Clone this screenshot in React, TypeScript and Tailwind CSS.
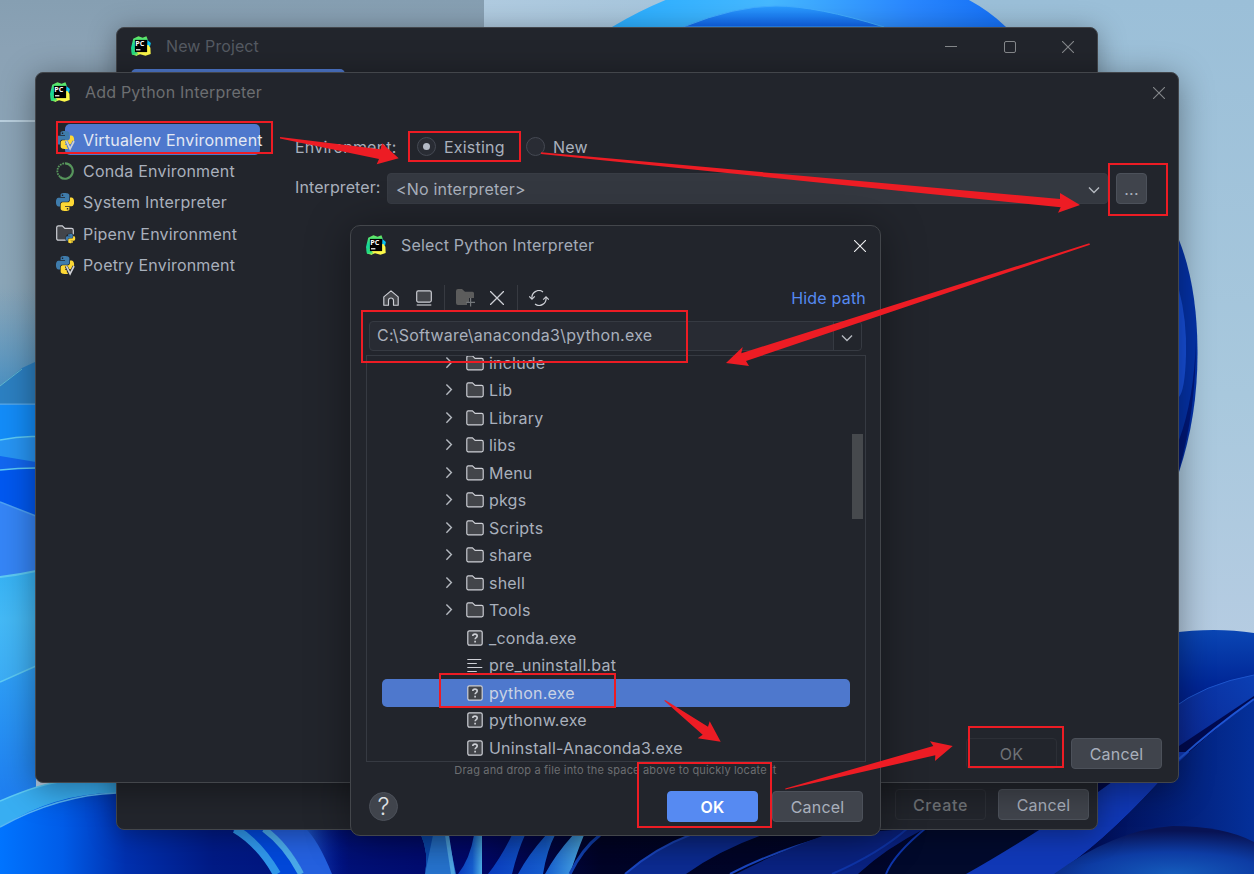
import type { ReactNode } from "react";

type FileKind = "folder" | "exe" | "text";

interface TreeNode {
  name: string;
  kind: FileKind;
  selected?: boolean;
}

const TREE: TreeNode[] = [
  { name: "include", kind: "folder" },
  { name: "Lib", kind: "folder" },
  { name: "Library", kind: "folder" },
  { name: "libs", kind: "folder" },
  { name: "Menu", kind: "folder" },
  { name: "pkgs", kind: "folder" },
  { name: "Scripts", kind: "folder" },
  { name: "share", kind: "folder" },
  { name: "shell", kind: "folder" },
  { name: "Tools", kind: "folder" },
  { name: "_conda.exe", kind: "exe" },
  { name: "pre_uninstall.bat", kind: "text" },
  { name: "python.exe", kind: "exe", selected: true },
  { name: "pythonw.exe", kind: "exe" },
  { name: "Uninstall-Anaconda3.exe", kind: "exe" },
];

const PY_TOP =
  "M14.25.18l.9.2.73.26.59.3.45.32.34.34.25.34.16.33.1.3.04.26.02.2-.01.13V8.5l-.05.63-.13.55-.21.46-.26.38-.3.31-.33.25-.35.19-.35.14-.33.1-.3.07-.26.04-.21.02H8.77l-.69.05-.59.14-.5.22-.41.27-.33.32-.27.35-.2.36-.15.37-.1.35-.07.32-.04.27-.02.21v3.06H3.17l-.21-.03-.28-.07-.32-.12-.35-.18-.36-.26-.36-.36-.35-.46-.32-.59-.28-.73-.21-.88-.14-1.05-.05-1.23.06-1.22.16-1.04.24-.87.32-.71.36-.57.4-.44.42-.33.42-.24.4-.16.36-.1.32-.05.24-.01h.16l.06.01h8.16v-.83H6.18l-.01-2.75-.02-.37.05-.34.11-.31.17-.28.25-.26.31-.23.38-.2.44-.18.51-.15.58-.12.64-.1.71-.06.77-.04.84-.02 1.27.05zm-6.3 1.98l-.23.33-.08.41.08.41.23.34.33.22.41.09.41-.09.33-.22.23-.34.08-.41-.08-.41-.23-.33-.33-.22-.41-.09-.41.09z";
const PY_BOTTOM =
  "M21.1 6.11l.28.06.32.12.35.18.36.27.36.35.35.47.32.59.28.73.21.88.14 1.04.05 1.23-.06 1.23-.16 1.04-.24.86-.32.71-.36.57-.4.45-.42.33-.42.24-.4.16-.36.09-.32.05-.24.02-.16-.01h-8.22v.82h5.84l.01 2.76.02.36-.05.34-.11.31-.17.29-.25.25-.31.24-.38.2-.44.17-.51.15-.58.13-.64.09-.71.07-.77.04-.84.01-1.27-.04-1.07-.14-.9-.2-.73-.25-.59-.3-.45-.33-.34-.34-.25-.34-.16-.33-.1-.3-.04-.25-.02-.2.01-.13v-5.34l.05-.64.13-.54.21-.46.26-.38.3-.32.33-.24.35-.2.35-.14.33-.1.3-.06.26-.04.21-.02.13-.01h5.84l.69-.05.59-.14.5-.21.41-.28.33-.32.27-.35.2-.36.15-.36.1-.35.07-.32.04-.28.02-.21V6.07h2.09l.14.01zm-6.47 14.25l-.23.33-.08.41.08.41.23.33.33.23.41.08.41-.08.33-.23.23-.33.08-.41-.08-.41-.23-.33-.33-.23-.41-.08-.41.08z";

function PythonMark() {
  return (
    <>
      <path d={PY_TOP} fill="#3f7cac" />
      <path d={PY_BOTTOM} fill="#fdd835" />
    </>
  );
}

function IconPython() {
  return (
    <svg viewBox="0 0 24 24" className="h-[18px] w-[18px] shrink-0">
      <PythonMark />
    </svg>
  );
}

function IconVirtualenv({ halo = "#22252c" }: { halo?: string }) {
  return (
    <svg viewBox="0 0 18 18" className="h-[18px] w-[18px] shrink-0 overflow-visible">
      <g transform="scale(.75)">
        <PythonMark />
      </g>
      <path d="M10.2 10.2l3.8 8 4-8" fill="none" stroke={halo} strokeWidth="3" />
      <path d="M10.4 10.2l3.7 7.6 3.9-7.6" fill="none" stroke="#ced0d6" strokeWidth="1.8" />
    </svg>
  );
}

function IconConda() {
  return (
    <svg viewBox="0 0 18 18" className="h-[18px] w-[18px] shrink-0" fill="none" stroke="#57965c">
      <path d="M9 1.3a7.7 7.7 0 1 1-5 13.5" strokeWidth="2.2" />
      <path d="M4 14.8a7.7 7.7 0 0 1 5-13.5" strokeWidth="1.8" strokeDasharray="1.7 .9" />
    </svg>
  );
}

function IconPipenv() {
  return (
    <svg viewBox="0 0 18 18" className="h-[18px] w-[18px] shrink-0 overflow-visible">
      <path
        d="M.7 2.6C.7 1.5 1.4.8 2.5.8h3.8l2.6 2.6h6.6c1.1 0 1.8.7 1.8 1.8v8.2c0 1.1-.7 1.8-1.8 1.8h-13c-1.1 0-1.8-.7-1.8-1.8z"
        fill="#43454a"
        stroke="#ced0d6"
        strokeWidth="1.2"
      />
      <circle cx="14.5" cy="13.5" r="5.2" fill="#22252c" />
      <g transform="translate(9.8 8.8) scale(.39)">
        <PythonMark />
      </g>
    </svg>
  );
}

function IconPyCharm() {
  return (
    <svg viewBox="0 0 20 20" className="h-5 w-5 shrink-0">
      <defs>
        <linearGradient id="pc-green" x1="0" y1="0" x2=".6" y2="1">
          <stop offset="0" stopColor="#21d789" />
          <stop offset=".55" stopColor="#22dd80" />
          <stop offset="1" stopColor="#b4ee4e" />
        </linearGradient>
        <linearGradient id="pc-left" x1="0" y1="0" x2="0" y2="1">
          <stop offset="0" stopColor="#6bea60" />
          <stop offset=".5" stopColor="#16d69b" />
          <stop offset="1" stopColor="#2bdc75" />
        </linearGradient>
      </defs>
      <path d="M2.2 2.8L7.4.2l4.2 1.5L15.4.2l1.3 3.2L12 13 6 19.5.9 18.4 0 12z" fill="url(#pc-left)" />
      <path d="M16.4 4l3.5 3-.9 3.4-3 1z" fill="#07c3f2" />
      <path d="M17.2 8.8l2.2 3 .3 6.2-5.2 1.7-5.4-1.5-4 1.4L3 15z" fill="#fcf84a" />
      <path d="M.6 14.5L5 15.5l3 3-2.6 1.3L1 18.6z" fill="url(#pc-green)" />
      <path d="M3.900 3.900h12.200v12.200H3.900z" fill="#000" />
      <text
        x="4.300"
        y="9.900"
        className="font-['Open_Sans',sans-serif] text-[7.200px] font-bold tracking-normal"
        fill="#fff"
      >
        PC
      </text>
      <path d="M5 13.200h4.400v1.200H5z" fill="#fff" />
    </svg>
  );
}

function IconFolder() {
  return (
    <svg viewBox="0 0 18 18" className="h-[18px] w-[18px] shrink-0">
      <path
        d="M.8 3.4c0-.9.6-1.5 1.5-1.5h4.1l2.7 2.5h6.6c.9 0 1.5.6 1.5 1.5v8.4c0 .9-.6 1.5-1.5 1.5H2.3c-.9 0-1.5-.6-1.5-1.5z"
        fill="#43454a"
        stroke="#ced0d6"
        strokeWidth="1.15"
      />
    </svg>
  );
}

function IconUnknownFile() {
  return (
    <svg viewBox="0 0 18 18" className="h-[18px] w-[18px] shrink-0" fill="none" stroke="#ced0d6">
      <rect x="1.8" y="1.8" width="14.4" height="14.4" rx="1.6" fill="#43454a" strokeWidth="1.2" />
      <path d="M6.8 7.1c0-1.2.9-2 2.2-2s2.200.8 2.200 1.900c0 1.600-2.100 1.500-2.100 3.300" strokeWidth="1.6" />
      <path d="M9.1 11.700v1.700" strokeWidth="1.7" />
    </svg>
  );
}

function IconTextFile() {
  return (
    <svg viewBox="0 0 18 18" className="h-[18px] w-[18px] shrink-0" stroke="#ced0d6" strokeWidth="1.2">
      <path d="M1.300 3.500h14M1.300 7.500h9.500M1.300 11.500h15M1.300 15.500h9.500" />
    </svg>
  );
}

function IconChevron({ dir }: { dir: "right" | "down" }) {
  return (
    <svg
      viewBox="0 0 12 12"
      className="h-3 w-3 shrink-0"
      fill="none"
      stroke="#b4b8bf"
      strokeWidth="1.4"
    >
      <path d={dir === "right" ? "M3.4.5l5 5.1-5 5.1" : "M1 3.5l5 5 5-5"} />
    </svg>
  );
}

function IconClose({ color, size = 12 }: { color: string; size?: number }) {
  return (
    <svg viewBox="0 0 12 12" width={size} height={size} className="shrink-0" stroke={color}>
      <path d="M0 0l12 12M12 0L0 12" strokeWidth="1.1" />
    </svg>
  );
}

function TitleBar({ title, color, children }: { title: string; color: string; children: ReactNode }) {
  return (
    <div className="flex h-[38px] shrink-0 items-center">
      <IconPyCharm />
      <span className={`ml-[15px] flex-1 ${color}`}>{title}</span>
      {children}
    </div>
  );
}

function Button({ label, variant = "normal" }: { label: string; variant?: "normal" | "primary" | "disabled" }) {
  const look = {
    normal: "border-[#4c515a] bg-[#40444c] text-[#a9b0bc]",
    primary: "border-[#568af2] bg-[#568af2] font-semibold text-white",
    disabled: "border-[#2c2f36] text-[#6f7276]",
  }[variant];
  return (
    <button
      type="button"
      className={`flex h-[31px] w-[91px] shrink-0 items-center justify-center rounded-[4px] border ${look}`}
    >
      {label}
    </button>
  );
}

function Wallpaper() {
  return (
    <svg viewBox="0 0 1254 874" className="absolute inset-0 h-full w-full">
      <defs>
        <linearGradient id="sky" x1="0" y1="0" x2="0" y2="1">
          <stop offset="0" stopColor="#9bbfd8" />
          <stop offset=".45" stopColor="#a8c8dd" />
          <stop offset=".75" stopColor="#b6cce2" />
        </linearGradient>
        <linearGradient id="sky-left" x1="0" y1="0" x2="1" y2="0">
          <stop offset="0" stopColor="#b0cbe0" />
          <stop offset="1" stopColor="#b0cbe0" stopOpacity="0" />
        </linearGradient>
        <linearGradient id="glass" x1="0" y1="0" x2="0" y2="1">
          <stop offset="0" stopColor="#869fb2" />
          <stop offset=".12" stopColor="#8ba2b5" />
          <stop offset=".7" stopColor="#8ba6b8" />
          <stop offset="1" stopColor="#6a9bbd" />
        </linearGradient>
        <linearGradient id="glass-tint" x1="0" y1="0" x2="0" y2="1">
          <stop offset="0" stopColor="#6f9fbe" stopOpacity="0" />
          <stop offset="1" stopColor="#3f8cc4" />
        </linearGradient>
        <linearGradient id="bloom" x1="0" y1="0" x2="1" y2="0">
          <stop offset="0" stopColor="#2aaeff" />
          <stop offset=".4" stopColor="#46b8ff" />
          <stop offset=".75" stopColor="#2a88ff" />
          <stop offset="1" stopColor="#1570f6" />
        </linearGradient>
        <linearGradient id="bloom-in" x1="0" y1="0" x2="0" y2="1">
          <stop offset="0" stopColor="#2b9dff" />
          <stop offset="1" stopColor="#0f63ec" />
        </linearGradient>
        <linearGradient id="petal-l" x1="0" y1="0" x2="0" y2="1">
          <stop offset="0" stopColor="#36b2f4" />
          <stop offset=".15" stopColor="#44b9f6" />
          <stop offset=".4" stopColor="#3aa9f4" />
          <stop offset="1" stopColor="#1a7ef2" />
        </linearGradient>
        <linearGradient id="petal-low" x1="0" y1="0" x2="0" y2="1">
          <stop offset="0" stopColor="#2fa0f6" />
          <stop offset=".6" stopColor="#1f80f0" />
        </linearGradient>
        <linearGradient id="navy" x1="0" y1="0" x2="1" y2="0">
          <stop offset="0" stopColor="#0074ff" />
          <stop offset=".05" stopColor="#005ce8" />
          <stop offset=".1" stopColor="#0030ae" />
          <stop offset=".17" stopColor="#001a84" />
          <stop offset=".38" stopColor="#00086e" />
          <stop offset=".48" stopColor="#000428" />
          <stop offset=".7" stopColor="#01062a" />
          <stop offset="1" stopColor="#000f5c" />
        </linearGradient>
        <linearGradient id="petal-r" x1="0" y1="0" x2="0" y2="1">
          <stop offset="0" stopColor="#0a46b4" />
          <stop offset=".45" stopColor="#002696" />
          <stop offset="1" stopColor="#000f6c" />
        </linearGradient>
        <linearGradient id="ribbon" x1="1" y1="0" x2="0" y2="1">
          <stop offset="0" stopColor="#0b3fb4" />
          <stop offset="1" stopColor="#0a2088" />
        </linearGradient>
        <linearGradient id="deep" x1="0" y1="0" x2="1" y2="0">
          <stop offset="0" stopColor="#000646" />
          <stop offset="1" stopColor="#04309a" />
        </linearGradient>
        <linearGradient id="stem" x1="0" y1="0" x2="1" y2="0">
          <stop offset="0" stopColor="#0a3fc4" />
          <stop offset=".6" stopColor="#1660d4" />
          <stop offset="1" stopColor="#4fb2ec" />
        </linearGradient>
        <linearGradient id="fade" x1="0" y1="0" x2="1" y2="0">
          <stop offset="0" stopColor="#2a72e0" />
          <stop offset="1" stopColor="#0010a0" stopOpacity="0" />
        </linearGradient>
        <radialGradient id="glow" cx=".6" cy="1" r=".9">
          <stop offset="0" stopColor="#155cbc" />
          <stop offset=".5" stopColor="#0d3ca4" />
          <stop offset="1" stopColor="#081354" />
        </radialGradient>
      </defs>

      <path d="M0 0h1254v874H0z" fill="url(#sky)" />
      <path d="M484 0h400v60H484z" fill="url(#sky-left)" />
      <path d="M612 27Q710-32 830-30T1006 27z" fill="url(#bloom)" />
      <path d="M683 27Q735 6 776 6T884 27z" fill="url(#bloom-in)" stroke="#42adff" />

      {/* translucent window left of the dialogs */}
      <path d="M0 0h484v404H0z" fill="url(#glass)" />
      <path d="M0 290h36v114H0z" fill="url(#glass-tint)" />
      <path d="M0 386l22-18 13-6v42H0z" fill="#2c80c2" />
      <path d="M0 386l22-17" stroke="#62b6cc" fill="none" />
      <path d="M0 121h36" stroke="#b9cfde" strokeWidth="2" />
      <path d="M0 404h36" stroke="#5ba8e4" />

      {/* left petals */}
      <path d="M0 404.5h36V560H0z" fill="#138cf8" />
      <path d="M0 440q18-4 36-3.5v30H0z" fill="#2795f4" />
      <path d="M0 456l36 6v8H0z" fill="#1267f0" />
      <path d="M0 470q18-2 36-2v60H0z" fill="#0058f0" />
      <path d="M0 502l36 14v62H0z" fill="#3585f6" />
      <path d="M0 577q18-2 36-6v320H0z" fill="url(#petal-l)" />
      <path d="M0 682l36-16v210H0z" fill="url(#petal-low)" />
      <path d="M0 801q45-19 62-19h68v50L0 840z" fill="#38aef2" />
      <g fill="none" stroke="#5ecbf4" strokeWidth="1.5">
        <path d="M0 440q18-4 36-3.5M0 470q18-2 36-2M0 682l36-16M0 801q45-19 62-19" />
        <path d="M0 577q18-2 36-6" strokeWidth="2" />
        <path d="M0 502l36 14" stroke="#4ea2f4" />
      </g>

      {/* bottom strip */}
      <path d="M0 827Q58 792 117 793v-40h980l157-79v200H0z" fill="url(#navy)" />
      <path d="M0 827Q58 795 117 793" fill="none" stroke="#57b6f4" strokeWidth="1.5" />
      <path d="M300 829h50v45h-50z" fill="url(#fade)" />
      <path d="M231 829q28 16 41 45h28q-16-30-36-45z" fill="#0147d8" />
      <path d="M235 829q24 14 42 45" fill="none" stroke="#2f95e8" strokeWidth="8" />
      <path d="M266 829q24 16 38 45h28q-14-34-26-45z" fill="#2460de" />
      <path d="M264 829q22 16 37 45" fill="none" stroke="#4aa8e8" strokeWidth="6" />
      <path d="M421 835q8 18 4 39h31l-8-39z" fill="#2674d0" />
      <path d="M421 835q8 18 4 39l8-39z" fill="#0a4bb4" />
      <path d="M447 835l6 39" stroke="#50a8e8" strokeWidth="4" />
      <path d="M474 835q-4 24-16 39h24V835z" fill="url(#stem)" />
      <path d="M512 835q-12 24-24 39h24q6-24 13-39zM546 835q-18 20-28 39h25q4-24 12-39zM573 835q-18 20-28 39h25q7-22 14-39z" fill="url(#stem)" />
      <path d="M600 835q-18 14-30 39" fill="none" stroke="#1244b8" strokeWidth="3" />
      <path d="M625 874q30-26 65-39h72q-44 16-76 39z" fill="#0c2c94" />
      <path d="M625 874q30-26 65-39M730 874q46-24 104-39" fill="none" stroke="#1b48c4" strokeWidth="2" />
      <path d="M736 874q46-24 92-40l98-6q-40 20-68 46z" fill="#0a2384" />
      <path d="M886 874q8-20 40-46h108v46z" fill="#020a2c" />
      <path d="M832 874q46-20 76-46M886 874q8-20 40-46" fill="none" stroke="#0f36ac" strokeWidth="2" />

      {/* right petals */}
      <path d="M1179 240q18 45 18.5 110T1179 472z" fill="#0432a8" />
      <path d="M1179 290q8 30 7 65t-7 42z" fill="#1750dc" />
      <path d="M1196 340q0 70-17 130v-30q15-40 17-100z" fill="#00187a" />
      <path d="M1170 633q45-6 84 0v120h-84z" fill="url(#petal-r)" />
      <path d="M1170 710q34-26 84-35v70l-84 40z" fill="url(#ribbon)" />
      <path d="M1170 710q34-26 84-35" fill="none" stroke="#1d55cc" />
      <path d="M1098 770l81-24 75-50v176H990q50-32 90-92z" fill="#000a50" />
      <path d="M966 874q50-28 132-82l56-40h40l60-53q-62 48-95 83-60 65-104 92z" fill="#1038b6" />
      <path d="M1254 699q-62 48-95 83-60 65-104 92h199z" fill="url(#deep)" />
      <path d="M1254 699q-42 30-75 60" fill="none" stroke="#1e55d4" strokeWidth="2" />
      <path d="M1054 874q60-44 118-48 52 0 82 16v32z" fill="url(#glow)" />
    </svg>
  );
}

function NewProjectWindow() {
  return (
    <div className="absolute top-[27px] left-[116px] flex h-[803px] w-[982px] flex-col rounded-lg border border-[#43464b] bg-[#22252c] px-[14px] shadow-[0_4px_28px_rgba(0,0,0,.35)]">
      <div className="-mt-px">
        <TitleBar title="New Project" color="text-[#555a62] tracking-[0.100px]">
          <div className="mt-0.5 mr-[9px] flex items-center gap-[46.500px]">
            <span className="mb-0.5 h-px w-3 bg-[#85888b]" />
            <span className="h-3 w-3 rounded-[2px] border border-[#85888b]" />
            <IconClose color="#85888b" />
          </div>
        </TitleBar>
      </div>
      <div className="mt-[3.500px] h-7 w-[214px] rounded-t-[5px] bg-[#4e78cd]" />
      <div className="mt-auto mr-[-6px] mb-[9px] flex justify-end gap-3 [&>button:first-child]:font-medium [&>button:first-child]:tracking-[0.700px]">
        <Button label="Create" variant="disabled" />
        <Button label="Cancel" />
      </div>
    </div>
  );
}

function EnvItem({ icon, label, selected }: { icon: ReactNode; label: string; selected?: boolean }) {
  return (
    <li className="relative flex h-[31.3px] items-center">
      {selected && <span className="absolute top-0 right-0 bottom-0 left-[9px] rounded-[5px] bg-[#4e78cd]" />}
      <span className="relative flex">{icon}</span>
      <span className={`relative ml-[9px] whitespace-nowrap ${selected ? "text-[#e4e9f3]" : ""}`}>{label}</span>
    </li>
  );
}

function Radio({ label, checked }: { label: string; checked?: boolean }) {
  return (
    <span className="flex items-center gap-2">
      <span className="grid h-[19px] w-[19px] place-items-center rounded-full border border-[#454953] bg-[#292c34]">
        {checked && <span className="h-[7px] w-[7px] rounded-full bg-[#b4bac6]" />}
      </span>
      {label}
    </span>
  );
}

function AddInterpreterWindow() {
  return (
    <div className="absolute top-[72px] left-[35px] flex h-[711px] w-[1144px] flex-col rounded-lg border border-[#43464b] bg-[#22252c] pl-[14px] shadow-[0_6px_34px_rgba(0,0,0,.4)]">
      <TitleBar title="Add Python Interpreter" color="text-[#6c6e71]">
        <div className="mt-0.5 mr-[13px]">
          <IconClose color="#85888b" />
        </div>
      </TitleBar>
      <div className="flex flex-1">
        <ul className="mt-[13.2px] ml-[6px] w-[204px] shrink-0">
          <EnvItem icon={<IconVirtualenv halo="#4e78cd" />} label="Virtualenv Environment" selected />
          <EnvItem icon={<IconConda />} label="Conda Environment" />
          <EnvItem icon={<IconPython />} label="System Interpreter" />
          <EnvItem icon={<IconPipenv />} label="Pipenv Environment" />
          <EnvItem icon={<IconVirtualenv />} label="Poetry Environment" />
        </ul>
        <div className="ml-[35px] flex flex-1 flex-col">
          <div className="mt-[20px] flex h-[31px] items-center">
            <span className="w-[122px]">Environment:</span>
            <span className="w-[109px]">
              <Radio label="Existing" checked />
            </span>
            <Radio label="New" />
          </div>
          <div className="mt-[11px] flex h-[31px] items-center">
            <span className="mb-1 w-[92px] tracking-[0.1px]">Interpreter:</span>
            <div className="flex h-full w-[721px] items-center justify-between rounded-[4px] border border-[#383c44] bg-[#343840] pr-[7px] pl-[8px]">
              <span>&lt;No interpreter&gt;</span>
              <span className="mt-0.5 flex">
                <IconChevron dir="down" />
              </span>
            </div>
            <button
              type="button"
              className="ml-2 h-[31px] w-[31px] rounded-[4px] border border-[#4c515a] bg-[#40444c]"
            >
              ...
            </button>
          </div>
          <div className="mt-auto mr-[16px] mb-[13px] flex justify-end gap-[14px]">
            <Button label="OK" variant="disabled" />
            <Button label="Cancel" />
          </div>
        </div>
      </div>
    </div>
  );
}

function Toolbar() {
  return (
    <div className="mt-[20px] flex h-[28px] items-center pl-[17px]">
      <svg viewBox="0 0 16 16" className="h-4 w-4" fill="#43454a" stroke="#ced0d6" strokeWidth="1.15">
        <path d="M.8 6.9L8 .9l7.2 6v8.3h-4.7v-4.7a2.5 2.5 0 0 0-5 0v4.7H.8z" strokeLinejoin="round" />
      </svg>
      <svg viewBox="0 0 16 16" className="ml-[17px] h-4 w-4" fill="#43454a" stroke="#ced0d6" strokeWidth="1.15">
        <rect x=".7" y=".9" width="14.6" height="11.2" rx="1.5" />
        <path d="M.7 15h14.6" />
      </svg>
      <span className="ml-3 h-[26px] w-px bg-[#373a41]" />
      <svg viewBox="0 0 20 18" className="ml-[11px] h-[18px] w-5">
        <path d="M0 2Q0 0 2 0h4l3 2.8h7.5q1.500 0 1.500 1.500V9h-5v4h-2v3H2q-2 0-2-2z" fill="#5c5c5c" />
        <path d="M14.6 9v8.6M10.3 13.3h8.7" stroke="#74777b" strokeWidth="1.2" />
      </svg>
      <span className="ml-[14px] flex">
        <IconClose color="#ced0d6" size={14} />
      </span>
      <span className="ml-[13px] h-[26px] w-px bg-[#373a41]" />
      <svg viewBox="0 0 20 16" className="ml-[11px] h-4 w-5" fill="none" stroke="#ced0d6" strokeWidth="1.2">
        <path d="M3 8.6A7 7 0 0 1 14 1.9M17 7.4A7 7 0 0 1 6 14.1" />
        <path d="M.2 6.4L3 9.2l2.8-2.8M14.2 9.6L17 6.8l2.8 2.8" />
      </svg>
      <span className="mr-[-1px] ml-auto text-[#568af2]">Hide path</span>
    </div>
  );
}

function TreeRow({ node }: { node: TreeNode }) {
  return (
    <li
      className={`flex h-[27.5px] items-center rounded-[5px] pl-[61px] ${
        node.selected ? "bg-[#4e78cd] text-[#c9d2e4]" : ""
      }`}
    >
      <span className="w-[23px]">{node.kind === "folder" && <IconChevron dir="right" />}</span>
      {node.kind === "folder" && <IconFolder />}
      {node.kind === "exe" && <IconUnknownFile />}
      {node.kind === "text" && <IconTextFile />}
      <span className="ml-[5px]">{node.name}</span>
    </li>
  );
}

function SelectDialog() {
  return (
    <div className="absolute top-[225px] left-[350px] flex h-[611px] w-[531px] flex-col rounded-[10px] border border-[#43464b] bg-[#22252c] px-[15px] shadow-[0_4px_44px_rgba(0,0,0,.4)]">
      <TitleBar title="Select Python Interpreter" color="text-[#a3abb8] tracking-[0.160px]">
        <div className="mt-0.5 mr-[-1px]">
          <IconClose color="#f0f1f2" />
        </div>
      </TitleBar>
      <Toolbar />
      <div className="mt-[9px] ml-[3px] flex h-[30px] w-[493px] shrink-0 rounded-[4px] border border-[#363a42] bg-[#282b33]">
        <span className="flex-1 pl-[7px] leading-[27px] tracking-[0.24px]">C:\Software\anaconda3\python.exe</span>
        <span className="grid w-[28px] place-items-center rounded-r-[4px] border-l border-[#363a42] bg-[#22252c] pt-1 pr-0.5">
          <IconChevron dir="down" />
        </span>
      </div>
      <div className="relative mt-1 h-[407px] w-[500px] shrink-0 overflow-hidden border border-[#363a42]">
        <ul className="-mt-[7px] ml-[15px] w-[468px]">
          {TREE.map((node) => (
            <TreeRow key={node.name} node={node} />
          ))}
        </ul>
        <span className="absolute top-[78px] right-[2px] h-[85px] w-[11px] bg-[#46494d]" />
      </div>
      <p className="text-center text-[11px] leading-[16px] tracking-[0.17px] text-[#6c6e71]">
        Drag and drop a file into the space above to quickly locate it
      </p>
      <div className="mt-[13px] flex items-center pr-[2px] pl-[3px]">
        <span className="mr-auto grid h-[29px] w-[29px] place-items-center rounded-full border border-[#4c515a] bg-[#40444c] text-[24px] leading-none font-light tracking-normal text-[#dfe1e5]">
          ?
        </span>
        <div className="flex gap-[14px]">
          <Button label="OK" variant="primary" />
          <Button label="Cancel" />
        </div>
      </div>
    </div>
  );
}

/** Hand-drawn markers: frames round the controls to click and arrows between them. */
function Annotations() {
  return (
    <svg viewBox="0 0 1254 874" className="pointer-events-none absolute inset-0 h-full w-full">
      <g fill="none" stroke="#ed1c24" strokeWidth="2">
        <rect x="57" y="122" width="215" height="31" />
        <rect x="409" y="132" width="111" height="29" />
        <rect x="1109" y="164" width="58" height="51" />
        <rect x="362" y="311" width="325" height="51" />
        <rect x="440" y="674" width="175" height="33" />
        <rect x="638" y="763" width="133" height="64" />
        <rect x="969" y="727" width="94" height="40" />
      </g>
      <g fill="#ed1c24">
        <path d="M280 137l100.5 12.3 1.5-6 16.7 15-22 6 2.3-5.3L280 138.5z" />
        <path d="M541 152.3L1060 199v-6l20 12-22 7.7 2.7-5.4L541 154z" />
        <path d="M1089.3 243.3L741.3 353.3l1.4-6.3L726 363l23 3-3-5L1090 244.7z" />
        <path d="M664 700.5l1.5-.2L708 726.7l1.7-5.4 11 20.4-23-3.4 5-3.6z" />
        <path d="M785.3 788.5L933.3 746l-3.3-4.7 22.7 4.7L935 761l.3-5.7-150 34.2z" />
      </g>
    </svg>
  );
}

export default function App() {
  return (
    <main className="relative h-[874px] w-[1254px] overflow-hidden font-[Inter,sans-serif] text-[16px] leading-[20px] tracking-[0.2px] text-[#a9b0bc]">
      <Wallpaper />
      <NewProjectWindow />
      <AddInterpreterWindow />
      <SelectDialog />
      <Annotations />
    </main>
  );
}
